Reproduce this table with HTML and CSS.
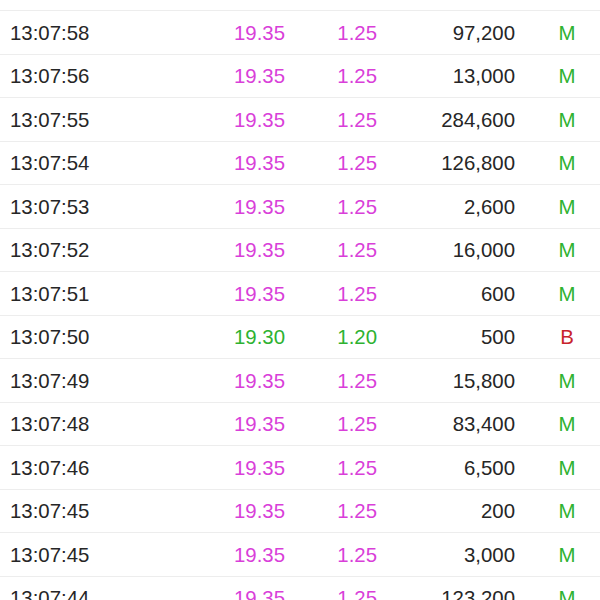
FILE: index.html
```html
<!DOCTYPE html>
<html lang="en">
<head>
<meta charset="utf-8">
<title>Trades</title>
<link rel="stylesheet" href="styles.css">
</head>
<body>
<div class="list">
  <div class="lead"></div>
  <div class="row"><span class="time">13:07:58</span><span class="up">19.35</span><span class="up">1.25</span><span class="vol">97,200</span><span class="type m">M</span></div>
  <div class="row"><span class="time">13:07:56</span><span class="up">19.35</span><span class="up">1.25</span><span class="vol">13,000</span><span class="type m">M</span></div>
  <div class="row"><span class="time">13:07:55</span><span class="up">19.35</span><span class="up">1.25</span><span class="vol">284,600</span><span class="type m">M</span></div>
  <div class="row"><span class="time">13:07:54</span><span class="up">19.35</span><span class="up">1.25</span><span class="vol">126,800</span><span class="type m">M</span></div>
  <div class="row"><span class="time">13:07:53</span><span class="up">19.35</span><span class="up">1.25</span><span class="vol">2,600</span><span class="type m">M</span></div>
  <div class="row"><span class="time">13:07:52</span><span class="up">19.35</span><span class="up">1.25</span><span class="vol">16,000</span><span class="type m">M</span></div>
  <div class="row"><span class="time">13:07:51</span><span class="up">19.35</span><span class="up">1.25</span><span class="vol">600</span><span class="type m">M</span></div>
  <div class="row"><span class="time">13:07:50</span><span class="dn">19.30</span><span class="dn">1.20</span><span class="vol">500</span><span class="type b">B</span></div>
  <div class="row"><span class="time">13:07:49</span><span class="up">19.35</span><span class="up">1.25</span><span class="vol">15,800</span><span class="type m">M</span></div>
  <div class="row"><span class="time">13:07:48</span><span class="up">19.35</span><span class="up">1.25</span><span class="vol">83,400</span><span class="type m">M</span></div>
  <div class="row"><span class="time">13:07:46</span><span class="up">19.35</span><span class="up">1.25</span><span class="vol">6,500</span><span class="type m">M</span></div>
  <div class="row"><span class="time">13:07:45</span><span class="up">19.35</span><span class="up">1.25</span><span class="vol">200</span><span class="type m">M</span></div>
  <div class="row"><span class="time">13:07:45</span><span class="up">19.35</span><span class="up">1.25</span><span class="vol">3,000</span><span class="type m">M</span></div>
  <div class="row"><span class="time">13:07:44</span><span class="up">19.35</span><span class="up">1.25</span><span class="vol">123,200</span><span class="type m">M</span></div>
</div>
</body>
</html>
```
FILE: styles.css
```css
html, body {
  margin: 0;
  padding: 0;
  background: #ffffff;
  overflow: hidden;
}
body {
  height: 600px;
  font-family: "Liberation Sans", Arial, sans-serif;
  font-size: 20.4px;
  color: #262626;
}
.lead {
  height: 10px;
  border-bottom: 1px solid #ededed;
}
.row {
  box-sizing: border-box;
  height: 43.5px;
  display: grid;
  grid-template-columns: 1fr 85px 92px 138px 69px;
  align-items: center;
  padding: 2px 16px 0 10px;
  border-bottom: 1px solid #ededed;
}
.row > span {
  text-align: right;
}
.row > .time {
  text-align: left;
}
.up { color: #d93fd9; }
.dn { color: #2eb231; }
.vol { color: #262626; }
.row > .type {
  text-align: center;
  padding-left: 35px;
}
.m { color: #2eb231; }
.b { color: #c8232c; }
```
